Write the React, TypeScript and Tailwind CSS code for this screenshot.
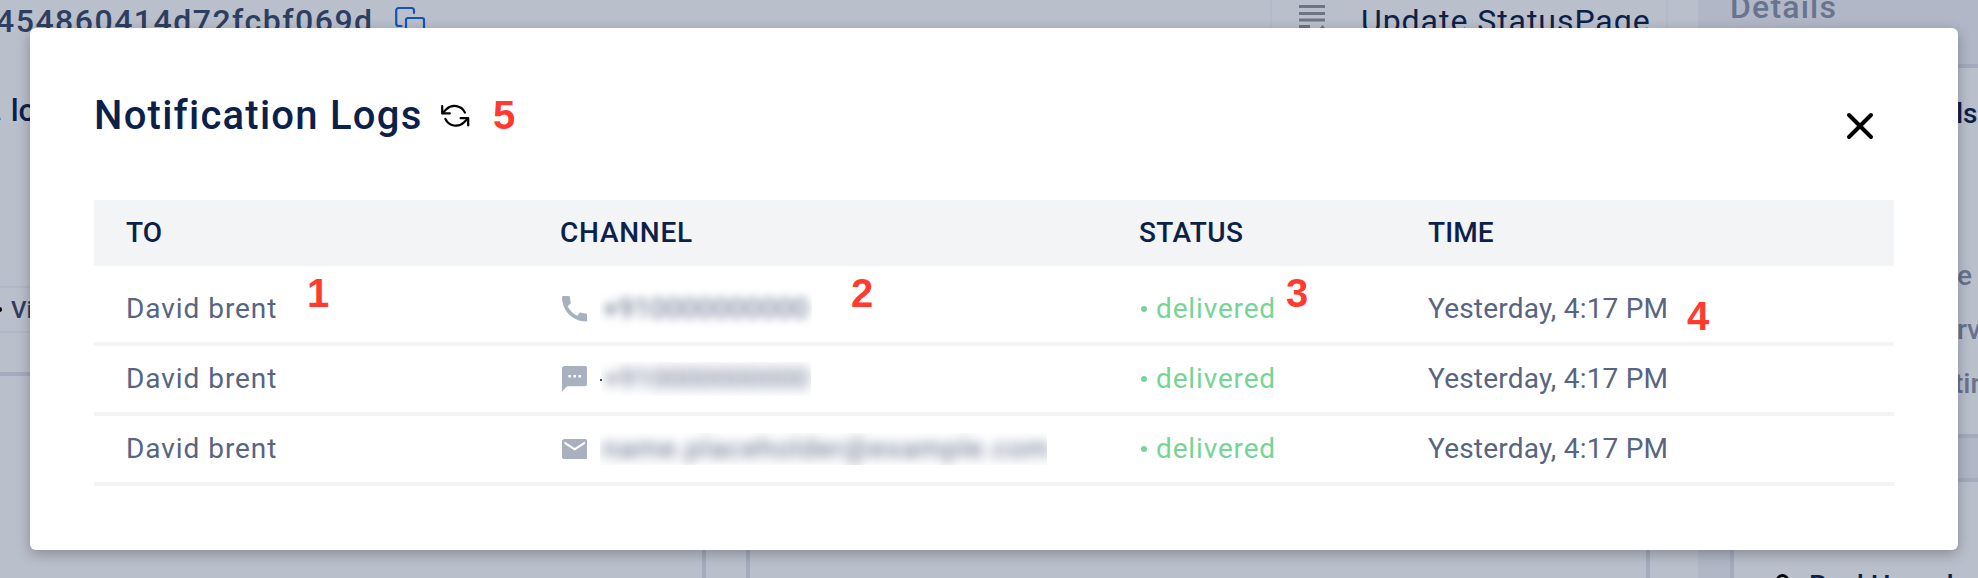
import type { ReactNode } from "react";

const NAVY = "text-[#0c2149]";

function CopyIcon() {
  return (
    <svg className="mt-1.5 ml-[20px] shrink-0" width="32" height="32" viewBox="0 0 32 32" fill="none" stroke="#1452b5" strokeWidth="2.2" strokeLinecap="round">
      <path d="M6.5 20H3.6A2.5 2.5 0 0 1 1.2 17.6V4.6A2.6 2.6 0 0 1 3.8 2H16.4A2.4 2.4 0 0 1 19 4.4V7" />
      <rect x="11" y="12" width="18" height="18" rx="2" />
    </svg>
  );
}

function ListIcon() {
  return (
    <svg className="mt-1 ml-[27px] shrink-0" width="28" height="30" viewBox="0 0 28 30" fill="#6f7583">
      <path d="M0 1h26v3H0zM0 8h26v3H0zM0 14.5h26v3H0zM0 21h11v3H0zM23.5 21l5 6h-10z" />
    </svg>
  );
}

function RefreshIcon() {
  return (
    <svg className="shrink-0" width="30" height="26" viewBox="0 0 30 26" fill="none" stroke="#000" strokeWidth="2.2" strokeLinecap="round" strokeLinejoin="round">
      <path d="M1.2 3.2V10.4H8.8" />
      <path d="M1.8 9.8L5.3 6.3A11.6 11.6 0 0 1 24 9.6" />
      <path d="M27.2 22.4V15.2H19.6" />
      <path d="M26.6 15.8L23.1 19.3A11.6 11.6 0 0 1 4.4 16" />
    </svg>
  );
}

function PhoneIcon() {
  return (
    <svg width="25.4" height="25.4" viewBox="3 3 18 18" fill="#a9b0bf">
      <path d="M20.01 15.38c-1.23 0-2.42-.2-3.53-.56-.35-.12-.74-.03-1.01.24l-1.57 1.97c-2.83-1.35-5.48-3.9-6.89-6.83l1.95-1.66c.27-.28.35-.67.24-1.02-.37-1.11-.56-2.3-.56-3.53 0-.54-.45-.99-.99-.99H4.19C3.65 3 3 3.24 3 3.99 3 13.28 10.73 21 20.01 21c.71 0 .99-.63.99-1.18v-3.45c0-.54-.45-.99-.99-.99z" />
    </svg>
  );
}

function SmsIcon() {
  return (
    <svg width="25.4" height="25.4" viewBox="2 2 20 20" fill="#a9b0bf">
      <path d="M20 2H4c-1.1 0-2 .9-2 2v18l4-4h14c1.1 0 2-.9 2-2V4c0-1.1-.9-2-2-2zM9 11H7V9h2v2zm4 0h-2V9h2v2zm4 0h-2V9h2v2z" />
    </svg>
  );
}

function MailIcon() {
  return (
    <svg width="25.4" height="20.4" viewBox="2 4 20 16" fill="#a9b0bf">
      <path d="M20 4H4c-1.1 0-2 .9-2 2v12c0 1.1.9 2 2 2h16c1.1 0 2-.9 2-2V6c0-1.1-.9-2-2-2zm0 4l-8 5-8-5V6l8 5 8-5v2z" />
    </svg>
  );
}

type Row = { icon: ReactNode; contact: string; box: string; text: string; mark?: boolean };

const rows: Row[] = [
  { icon: <PhoneIcon />, contact: "+910000000000", box: "ml-[13px] h-[42px] w-[212px]", text: "tracking-[0.1px] blur-[5px]" },
  { icon: <SmsIcon />, contact: "+910000000000", box: "ml-[14px] h-[34px] w-[210px]", text: "tracking-[0.1px] blur-[6px]", mark: true },
  { icon: <MailIcon />, contact: "name.placeholder@example.com", box: "ml-[13px] h-[32px] w-[447px]", text: "tracking-[1.15px] blur-[6px]" },
];

function Callout({ n, at }: { n: string; at: string }) {
  return (
    <span className={`absolute font-['Liberation_Sans',sans-serif] text-[40px] leading-[40px] font-bold text-[#ff3b30] ${at}`}>{n}</span>
  );
}

function Backdrop() {
  return (
    <div className="flex h-full w-full">
      <div className="flex w-[1698px] shrink-0 flex-col bg-[#babfcc]">
        <div className="flex h-[84px] shrink-0">
          <div className="flex w-[1270px] shrink-0">
            <span className="-ml-1 w-[379px] text-[32px] leading-[42px] font-medium tracking-[1.5px] text-[#2d3e61]">454860414d72fcbf069d</span>
            <CopyIcon />
          </div>
          <div className="flex w-[398px] shrink-0 border-x-2 border-[#b5bac8]">
            <ListIcon />
            <span className={`ml-[34px] text-[32px] leading-[42px] tracking-[0.95px] whitespace-nowrap ${NAVY}`}>Update StatusPage</span>
          </div>
        </div>
        <div className={`-ml-1.5 flex gap-2 pt-2 text-[31px] leading-[38px] font-medium ${NAVY}`}>
          <span>.</span>
          <span>lo</span>
        </div>
        <div className="mt-[156px] flex h-[90px] w-[700px] shrink-0 flex-col border-b-4 border-[#a4abbd]">
          <div className="flex h-[47px] items-center border-y-2 border-[#b1b7c6]">
            <span className="-ml-[3px] size-[5px] rounded-full bg-black" />
            <span className="ml-[9px] text-2xl font-medium text-[#2d3e61]">Vi</span>
          </div>
        </div>
        <div className="mt-10 flex grow gap-10">
          <div className="w-[706px] border-r-4 border-[#a4abbd]" />
          <div className="w-[904px] border-x-4 border-[#a4abbd]" />
        </div>
      </div>
      <div className="flex w-[280px] shrink-0 flex-col bg-[#b1b7c6] pl-8 font-medium text-[#67748f]">
        <div className="h-16 shrink-0 text-[32px] leading-[14px] tracking-[1.2px]">Details</div>
        <div className="flex h-[374px] shrink-0 flex-col items-end border-y-4 border-l-4 border-[#a4abbd] bg-[#babfcc] text-[28px] leading-8">
          <span className={`mt-[30px] pr-px tracking-[-0.3px] ${NAVY}`}>ls</span>
          <span className="mt-[130px] pr-[6px]">e</span>
          <span className="mt-[22px] -mr-[3px]">erv</span>
          <span className="mt-[22px] -mr-[8px]">tin</span>
        </div>
        <div className="mt-10 grow border-t-4 border-l-4 border-[#a4abbd] bg-[#babfcc]">
          <div className={`flex pt-[88px] pl-[42px] text-[28px] leading-8 whitespace-nowrap ${NAVY}`}>
            <span className="mt-1 mr-5 size-[13px] rounded-full border-[3px] border-black" />
            <span>Real Hound</span>
          </div>
        </div>
      </div>
    </div>
  );
}

export default function App() {
  return (
    <div className="relative h-[578px] w-[1978px] overflow-hidden font-[Roboto,sans-serif]">
      <Backdrop />
      <div className="absolute top-7 left-[30px] flex h-[522px] w-[1928px] flex-col rounded-[6px] bg-white px-16 shadow-[0_4px_14px_rgba(0,0,0,0.28)]">
        <div className="flex h-[172px] shrink-0 justify-between">
          <div className="flex items-start pt-[58px]">
            <h1 className={`w-[347px] text-[40px] leading-[60px] font-medium tracking-[1.25px] whitespace-nowrap ${NAVY}`}>Notification Logs</h1>
            <div className="flex h-[60px] items-center">
              <RefreshIcon />
            </div>
          </div>
          <svg className="mt-[84px] mr-5" width="28" height="28" viewBox="0 0 28 28" stroke="#000" strokeWidth="4" strokeLinecap="round">
            <path d="M3 3L25 25M25 3L3 25" />
          </svg>
        </div>
        <div className={`grid h-[66px] shrink-0 grid-cols-[434px_579px_289px_1fr] items-center bg-[#f3f4f6] pl-8 text-[28px] font-medium ${NAVY}`}>
          <span>TO</span>
          <span className="tracking-[0.75px]">CHANNEL</span>
          <span className="tracking-[0.4px]">STATUS</span>
          <span className="tracking-[0.1px]">TIME</span>
        </div>
        <div className="pt-2.5">
          {rows.map((row, i) => (
            <div key={i} className="grid h-[70px] grid-cols-[434px_579px_289px_1fr] items-center border-b-4 border-[#f3f4f6] pl-8 text-[28px] text-[#576482]">
              <span className="tracking-[0.95px]">David brent</span>
              <div className="flex items-center pl-0.5">
                {row.icon}
                <div className={`relative flex items-center ${row.box}`}>
                  {row.mark && <span className="absolute top-[17px] -left-px size-0.5 bg-[#3d4a6b]" />}
                  <div className="flex h-full w-full items-center overflow-hidden pl-0.5">
                    <span className={`whitespace-nowrap ${row.text}`}>{row.contact}</span>
                  </div>
                </div>
              </div>
              <div className="flex items-center pl-0.5 text-[#76d596]">
                <span className="mr-[9px] size-1.5 rounded-full bg-current" />
                <span className="tracking-[0.85px]">delivered</span>
              </div>
              <span className="tracking-[0.2px]">Yesterday, 4:17 PM</span>
            </div>
          ))}
        </div>
      </div>
      <Callout n="5" at="top-[95px] left-[493px]" />
      <Callout n="1" at="top-[273px] left-[307px]" />
      <Callout n="2" at="top-[273px] left-[851px]" />
      <Callout n="3" at="top-[273px] left-[1286px]" />
      <Callout n="4" at="top-[296px] left-[1687px]" />
    </div>
  );
}
